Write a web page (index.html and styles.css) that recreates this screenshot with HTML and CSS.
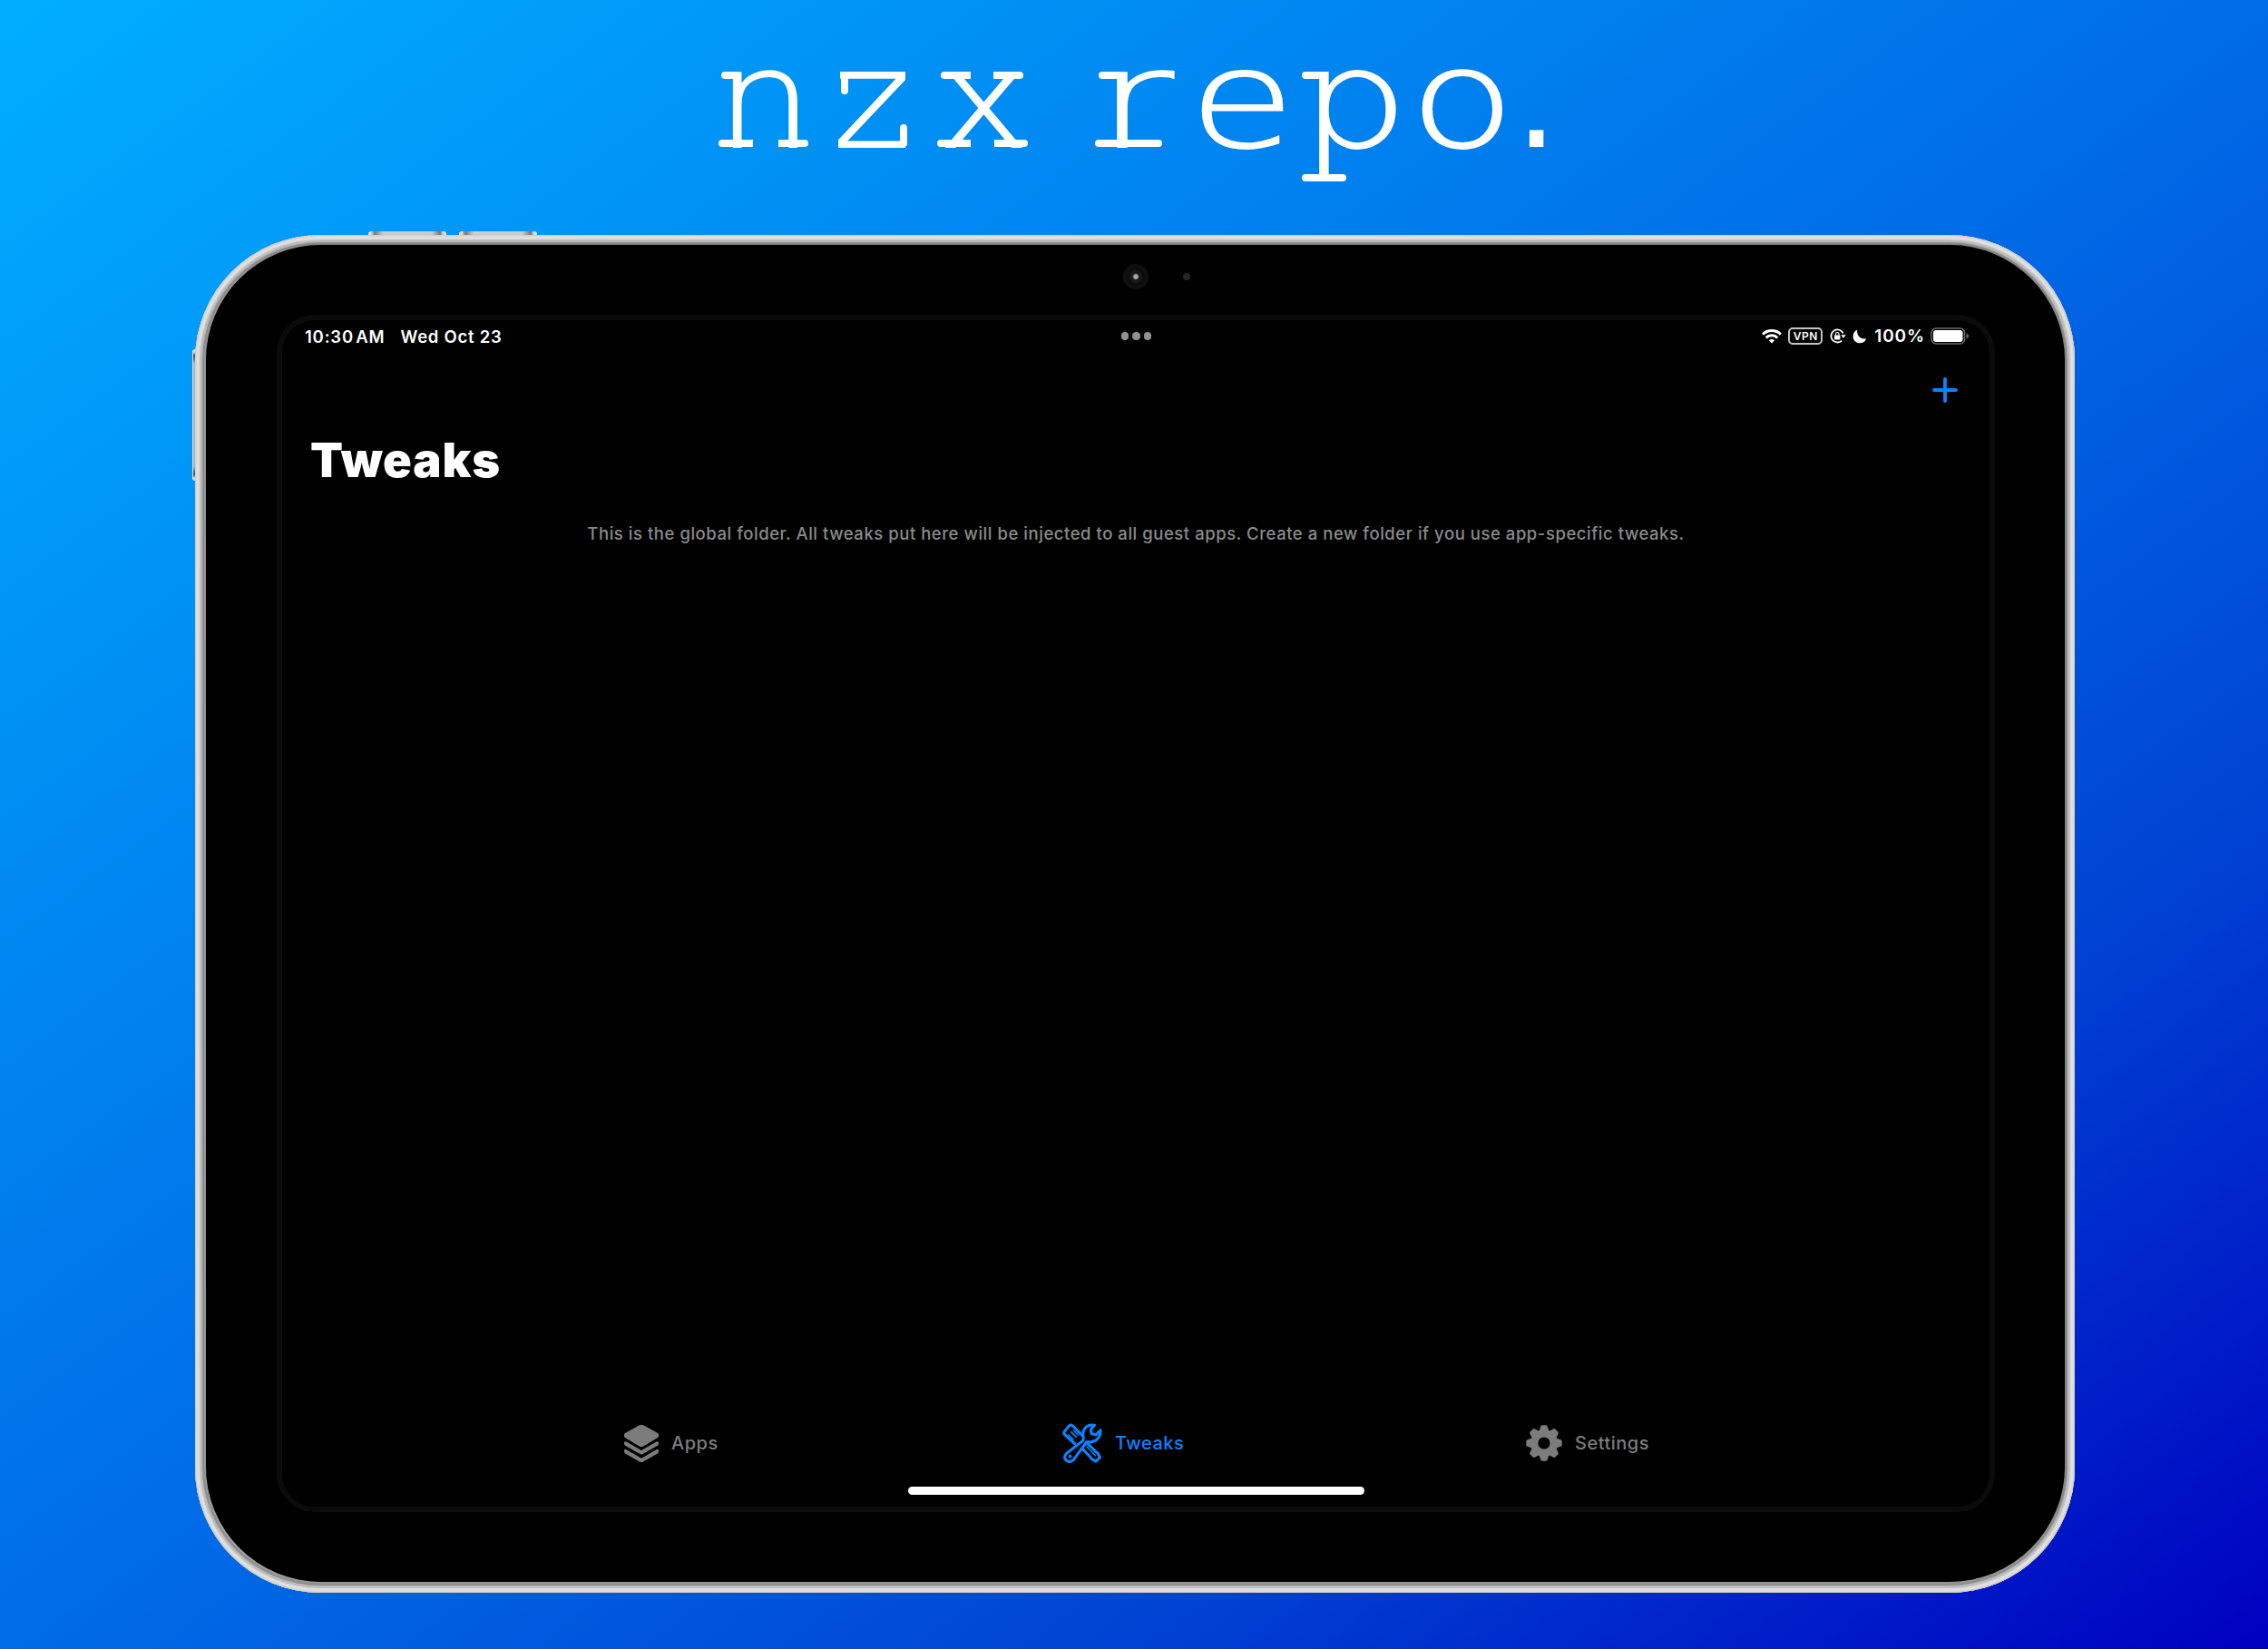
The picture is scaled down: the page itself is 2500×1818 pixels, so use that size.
FILE: index.html
```
<!DOCTYPE html>
<html lang="en">
<head>
<meta charset="utf-8">
<title>nzx repo.</title>
<link rel="stylesheet" href="styles.css">
</head>
<body>
<h1 class="brand"><span class="ch ch-n"><b>n</b></span><span class="ch ch-z"><b>z</b></span><span class="ch ch-x"><b>x</b></span><span class="gap"> </span><span class="ch ch-r"><b>r</b></span><span class="ch ch-e"><b>e</b></span><span class="ch ch-p"><b>p</b></span><span class="ch ch-o"><b>o</b></span><span class="ch ch-dot"><b>.</b></span></h1>

<div class="tablet">
  <i class="key key-a"></i><i class="key key-b"></i><i class="key key-power"></i>
  <div class="bezel">
    <i class="camera"></i><i class="sensor"></i>
    <main class="screen">
      <header class="status">
        <div class="status-left"><span class="time">10:30 AM</span><span class="date">Wed Oct 23</span></div>
        <div class="dots"><i></i><i></i><i></i></div>
        <div class="status-right">
          <svg class="wifi" width="22" height="16" viewBox="0 0 22 16" fill="none" stroke="#fff" stroke-width="3"><path d="M1 5.6C6.5.2 15.500.2 21 5.600"/><path d="M4.700 9.400c3.500-3.400 9.100-3.400 12.600 0"/><path d="M11 15.600 7.800 12.300q3.200-2.700 6.400 0z" fill="#fff" stroke="none"/></svg>
          <span class="vpn">VPN</span>
          <svg class="lock" width="18" height="17" viewBox="0 0 18 17" fill="none" stroke="#fff" stroke-width="1.800"><path d="M14.700 5.400A7 7 0 1 0 13.200 13.600"/><path d="M12.200 7.300h5.600l-2.800 3.500z" fill="#fff" stroke="none"/><rect x="5" y="7.500" width="6.400" height="5" rx=".8" fill="#fff" stroke="none"/><path d="M6.400 7.800V6.300a1.800 1.800 0 0 1 3.600 0v1.500" stroke-width="1.200"/></svg>
          <svg class="moon" width="16" height="16" viewBox="0 0 16 16" fill="#fff"><path d="M5.200.6C4.300 6.600 8.500 11.600 15.200 10.400 13.700 13.700 11 15.300 8 15.300 3.900 15.300.6 12.200.6 8 .6 4.700 2.300 1.900 5.200.6z"/></svg>
          <span class="percent">100%</span>
          <svg class="battery" width="43" height="19" viewBox="0 0 43 19"><rect x="1" y="1" width="36.500" height="17" rx="5" fill="none" stroke="#6b6b6b" stroke-width="1.500"/><rect x="3" y="3" width="32.500" height="13" rx="3" fill="#fff"/><path d="M39.500 6.500q2.600 1 2.600 3t-2.600 3z" fill="#6b6b6b"/></svg>
        </div>
      </header>
      <div class="toolbar">
        <svg width="28" height="28" viewBox="0 0 28 28" stroke="#0a84ff" stroke-width="3.800" stroke-linecap="round"><path d="M14 2v24M2 14h24"/></svg>
      </div>
      <h2 class="heading">Tweaks</h2>
      <p class="note">This is the global folder. All tweaks put here will be injected to all guest apps. Create a new folder if you use app-specific tweaks.</p>
      <nav class="tabs">
        <a class="tab tab-apps">
          <svg width="38" height="43" viewBox="0 0 38 43" fill="#7c7c7c"><path d="M16.800 1.300q2.200-1.100 4.400 0L36.600 9.700q2.200 1.300 2.200 2.800t-2.200 2.800L21.200 24.400q-2.200 1.200-4.400 0L1.400 15.300Q-.4 14 -.4 12.500t1.800-2.800z"/><path d="M0 19.800q1-1.300 3 0l16 9.200 16-9.200q2-1.300 3 0v2q0 1.200-1.600 2.200L21 32.800q-2 1.200-4 0L1.600 24Q0 23 0 21.800z"/><path d="M0 28.500q1-1.300 3 0l16 9.200 16-9.200q2-1.300 3 0v2q0 1.200-1.600 2.200L21 41.500q-2 1.200-4 0L1.600 32.700Q0 31.700 0 30.500z"/></svg>
          <span>Apps</span>
        </a>
        <a class="tab tab-tweaks">
          <svg width="44" height="44" viewBox="0 0 44 44" fill="none" stroke="#0a84ff" stroke-width="3.100" stroke-linejoin="round" stroke-linecap="round"><path d="M13.500 22.500 2.500 12.500q-1.500-1.800 0-3.600L7.500 3q2-1.800 4 0L22 13.500"/><path d="M9.600 9.600l5.800 5.800M7 13l5 5M12.500 8l5 5" stroke-width="1.700"/><path d="M22.500 19.500 4.500 33.500Q1 37.500 4 40.800q4 3.400 8 0L27 20.500q5.500 1.300 10-1.600 5.500-4 5-11L37 12.800 32 11.500 31.500 7 35.500 2.300Q29 1 25.300 5.200q-4 4.600-2 11z"/><circle cx="8.500" cy="36.500" r="1.500" fill="#0a84ff" stroke-width="1"/><path d="M22.500 28.500 31.500 38q.5 2 2 2.200l3.500 2 4.500-4.500-2.200-4q-.5-1.500-2.300-2l-8.500-8.500"/><path d="M27 26l9.500 10" stroke-width="1.500"/></svg>
          <span>Tweaks</span>
        </a>
        <a class="tab tab-settings">
          <svg width="40" height="40" viewBox="-20 -20 40 40"><g fill="#7c7c7c"><circle r="14.800"/><g id="t"><path id="k" d="M-5.500-13 -3.800-18.300Q-3.300-19.700-2-19.700H2Q3.300-19.700 3.800-18.300L5.500-13z"/><use href="#k" transform="rotate(90)"/><use href="#k" transform="rotate(180)"/><use href="#k" transform="rotate(270)"/></g><use href="#t" transform="rotate(45)"/></g><circle r="6.600" fill="#000"/></svg>
          <span>Settings</span>
        </a>
      </nav>
      <div class="home"></div>
    </main>
  </div>
</div>
</body>
</html>
```
FILE: styles.css
```
* { box-sizing: border-box; }
body {
  margin: 0;
  width: 2500px;
  height: 1818px;
  overflow: hidden;
  background: linear-gradient(to bottom right, #00aeff 0%, #006ce7 50%, #0042d3 75%, #0000c0 100%);
  font-family: Inter, "Liberation Sans", sans-serif;
  color: #fff;
}

/* Wordmark: light letters with slab feet */
.brand {
  display: flex;
  height: 259px;
  margin: 0;
  padding: 36px 0 0 792px;
  font: 200 149px/150px "DejaVu Sans", sans-serif;
  -webkit-text-stroke: 1.8px #fff;
}
.ch { position: relative; height: 150px; }
.ch b {
  display: block;
  width: max-content;
  font-weight: 200;
  transform-origin: 0 127px;
}
.gap { width: 74px; white-space: pre; }
.ch::before, .ch::after { position: absolute; height: 8px; border-radius: 4px; }
.ch-n { width: 133px; }
.ch-n b { transform: translateX(-2px) scaleX(1.12); }
.ch-n::before { content: ""; left: 3px; top: 43px; width: 20px; background: #fff; }
.ch-n::after { content: ""; left: 0; top: 118px; width: 99px; background: linear-gradient(90deg, #fff 38px, transparent 38px 66px, #fff 66px); }
.ch-z { width: 108px; }
.ch-z b { transform: translateX(-7px) scaleX(1.1); }
.ch-z::before { content: ""; left: 2px; top: 43px; width: 8px; height: 25px; background: #fff; }
.ch-z::after { content: ""; left: 67px; top: 101px; width: 8px; height: 25px; background: #fff; }
.ch-x { width: 100px; }
.ch-x b { transform: translateX(1px) scaleX(1.14); }
.ch-x::before { content: ""; left: 4px; top: 43px; width: 91px; background: linear-gradient(90deg, #fff 33px, transparent 33px 58px, #fff 58px); }
.ch-x::after { content: ""; left: 0; top: 118px; width: 100px; background: linear-gradient(90deg, #fff 37px, transparent 37px 63px, #fff 63px); }
.ch-r { width: 116px; }
.ch-r b { transform: translateX(2px) scaleX(1.38); }
.ch-r::before { content: ""; left: 4px; top: 43px; width: 26px; background: #fff; }
.ch-r::after { content: ""; left: 0; top: 118px; width: 74px; background: #fff; }
.ch-e { width: 112px; }
.ch-e b { transform: translateX(-12px) scaleX(1.27); }
.ch-p { width: 130px; }
.ch-p b { transform: translateX(-1px) scaleX(1.25); }
.ch-p::before { content: ""; left: 0; top: 43px; width: 22px; background: #fff; }
.ch-p::after { content: ""; left: 0; top: 156px; width: 49px; background: #fff; }
.ch-o { width: 121px; }
.ch-o b { transform: translateX(-11px) scaleX(1.27); }
.ch-dot b { font-weight: 400; -webkit-text-stroke: 0; transform: translateX(-16px); }

/* Tablet body */
.tablet {
  position: relative;
  width: 2072px;
  height: 1497px;
  margin-left: 215px;
  padding: 11px 11px 11px 12px;
  border-radius: 138px;
  background: #c9c9c9;
  box-shadow: inset 0 0 2px 1px #c8c8c8, inset 0 0 1px 5px #e0e0e0, inset 0 0 1px 8px #bdbdbd, inset 0 0 2px 11px #8b8b8b;
}
.key { position: absolute; z-index: -1; border-radius: 3px; }
.key-a, .key-b { top: -4px; width: 86px; height: 10px; background: linear-gradient(90deg, #ddd 3px, #777 7px, #ccc 16px 70px, #777 79px, #ddd 83px); }
.key-a { left: 191px; }
.key-b { left: 291px; }
.key-power { left: -3px; top: 126px; width: 10px; height: 145px; border-left: 1px solid #ddd; background: linear-gradient(#ddd 3px, #444 7px, #b5b5b5 16px 129px, #444 138px, #ddd 142px); }
.bezel {
  position: relative;
  height: 1474px;
  padding: 77px 77px 77px 78px;
  border-radius: 127px;
  background: #000;
  box-shadow: 0 0 2px #333;
}
.camera {
  position: absolute;
  left: 1011px;
  top: 21px;
  width: 28px;
  height: 28px;
  border-radius: 50%;
  background: radial-gradient(circle, #aaa 0 2px, #555 3px, #111 4px, #1c1c1c 6px, #0a0a0a 8px, #101010 12px);
}
.sensor { position: absolute; left: 1077px; top: 31px; width: 8px; height: 8px; border-radius: 50%; background: #262626; }
.screen {
  display: flex;
  flex-direction: column;
  height: 1320px;
  border: 6px solid #0b0b0b;
  border-radius: 42px;
}

.status {
  display: grid;
  grid-template-columns: 1fr auto 1fr;
  align-items: center;
  height: 35px;
  padding: 0 22px 0 25px;
  font-size: 18.500px;
  font-weight: 600;
}
.status-left, .status-right, .dots { display: flex; align-items: center; }
.status-left { gap: 17px; }
.time { letter-spacing: .8px; word-spacing: -3px; }
.date { letter-spacing: .75px; }
.dots { gap: 4px; margin-right: 2px; }
.dots i { width: 8.500px; height: 8.500px; border-radius: 50%; background: #919191; }
.status-right { justify-content: flex-end; }
.vpn {
  width: 38px;
  height: 19px;
  margin: 0 8px 0 7px;
  border: 2px solid #c4c4c4;
  border-radius: 5px;
  font-size: 12px;
  line-height: 15px;
  letter-spacing: .5px;
  text-align: center;
}
.moon { margin: 0 8px 0 7px; }
.percent { margin-right: 6px; letter-spacing: .9px; font-size: 19px; }

.toolbar { display: flex; justify-content: flex-end; align-items: center; height: 84px; padding-right: 35px; }
.heading { margin: 3px 0 0 31px; font-size: 52.500px; line-height: 64px; font-weight: 900; letter-spacing: .9px; }
.note {
  margin: 37px 0 0;
  text-align: center;
  font-size: 18.500px;
  line-height: 24px;
  font-weight: 550;
  letter-spacing: .54px;
  color: #8a8a8a;
}
.tabs {
  display: grid;
  grid-template-columns: 497px 497px 1fr;
  height: 50px;
  margin: auto 0 23px 218px;
  font-size: 20px;
  font-weight: 530;
  color: #7c7c7c;
}
.tab { display: flex; align-items: center; gap: 14px; }
.tab-apps { padding-left: 159px; }
.tab-tweaks { padding-left: 145px; color: #0a84ff; }
.tab-settings { padding-left: 159px; }
.tab span { letter-spacing: .5px; }
.home { width: 503px; height: 9px; margin: 0 auto 13px; border-radius: 5px; background: #fff; }
```
